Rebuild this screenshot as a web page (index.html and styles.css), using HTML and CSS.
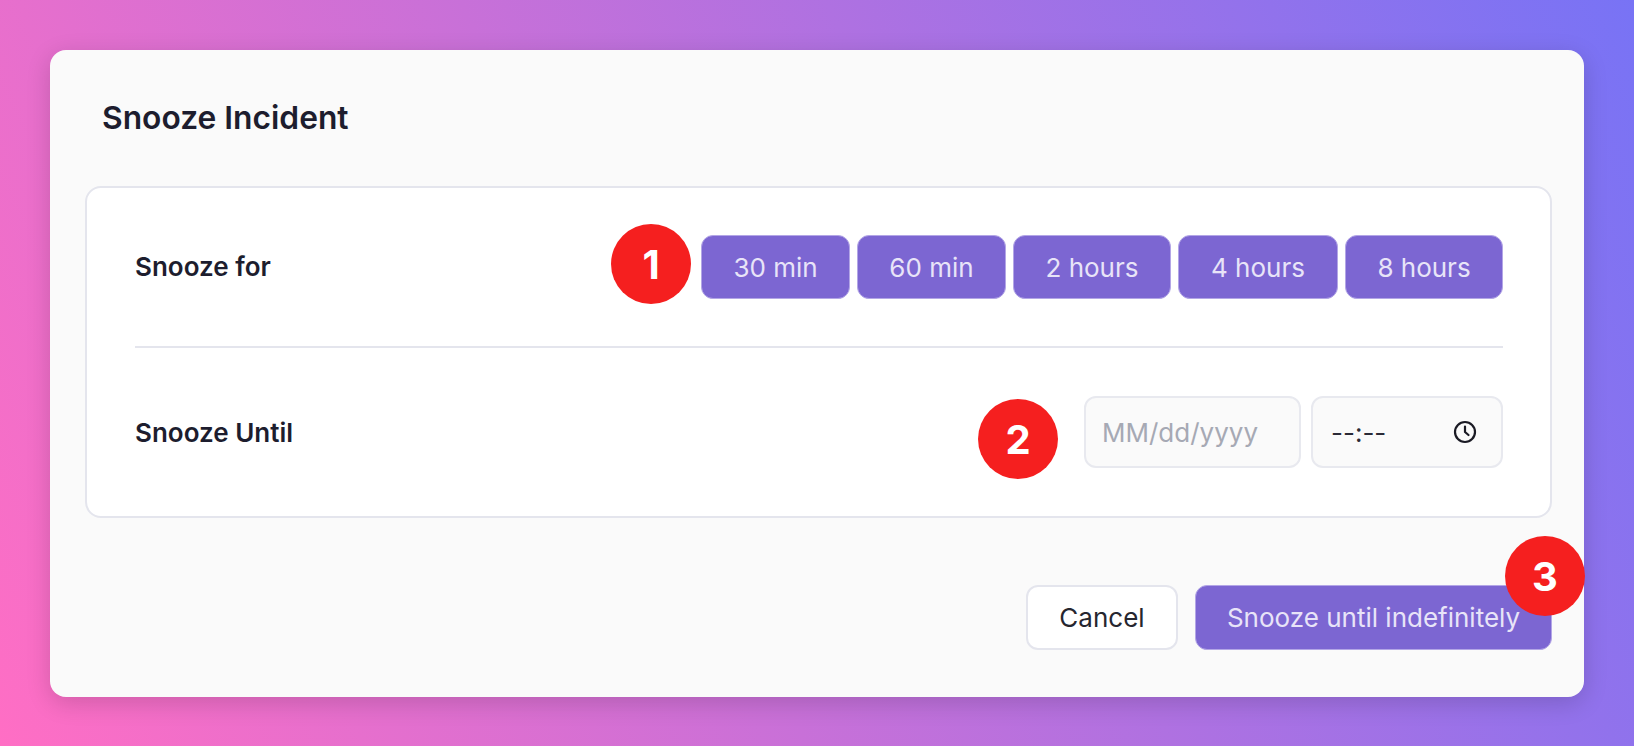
FILE: index.html
```html
<!DOCTYPE html>
<html lang="en">
<head>
<meta charset="utf-8">
<title>Snooze Incident</title>
<link rel="stylesheet" href="styles.css">
</head>
<body>
<main class="modal">
  <h1 class="title">Snooze Incident</h1>
  <section class="panel">
    <div class="row row-top">
      <span class="label">Snooze for</span>
      <div class="choices">
        <button class="btn btn-primary btn-30">30 min</button>
        <button class="btn btn-primary btn-60">60 min</button>
        <button class="btn btn-primary btn-2h">2 hours</button>
        <button class="btn btn-primary btn-4h">4 hours</button>
        <button class="btn btn-primary btn-8h">8 hours</button>
      </div>
    </div>
    <div class="row row-bottom">
      <span class="label">Snooze Until</span>
      <div class="fields">
        <div class="field field-date">MM/dd/yyyy</div>
        <div class="field field-time">
          <span class="time-value">--:--</span>
          <svg class="clock" viewBox="0 0 24 24" width="24" height="24" fill="none" stroke="#1a1a24" stroke-width="2.2" stroke-linecap="round" stroke-linejoin="round"><circle cx="12" cy="12" r="10"/><path d="M12 6.5V12l3.5 3"/></svg>
        </div>
      </div>
    </div>
  </section>
  <footer class="footer">
    <button class="btn btn-cancel">Cancel</button>
    <button class="btn btn-primary btn-submit">Snooze until indefinitely</button>
  </footer>
  <span class="badge badge-1">1</span>
  <span class="badge badge-2">2</span>
  <span class="badge badge-3">3</span>
</main>
</body>
</html>
```
FILE: styles.css
```css
* { box-sizing: border-box; }
html, body { height: 100%; }
body {
  margin: 0;
  padding: 50px;
  background: linear-gradient(65deg, #ff6ec4, #7873f5);
  font-family: Inter, "Liberation Sans", sans-serif;
  overflow: hidden;
}
.modal {
  position: relative;
  width: 1534px;
  height: 647px;
  padding: 0 32px 0 35px;
  background: #fafafa;
  border-radius: 16px;
  box-shadow: 0 6px 24px rgba(0, 0, 0, 0.16);
}
.title {
  margin: 0;
  padding: 49px 0 0 17px;
  height: 136px;
  font-size: 31.75px;
  line-height: 38px;
  font-weight: 600;
  color: #1d1d2e;
}
.panel {
  background: #fff;
  border: 2px solid #e4e5ed;
  border-radius: 16px;
  padding: 0 47px 0 48px;
  height: 332px;
}
.row {
  display: flex;
  align-items: center;
  justify-content: space-between;
}
.row-top {
  height: 160px;
  border-bottom: 2px solid #e4e5ed;
}
.row-bottom { height: 168px; }
.label {
  font-size: 26px;
  font-weight: 600;
  color: #1d1d2e;
}
.row-top .label { margin-top: -2px; }
.choices { display: flex; gap: 7px; }
.btn {
  height: 65px;
  border-radius: 12px;
  font-family: inherit;
  font-size: 26px;
  font-weight: 400;
  padding: 0;
}
.btn-primary {
  color: #e8e4f8;
  background: #7c66d2;
  border: 1px solid #b3a6e6;
}
.choices .btn { height: 64px; }
.btn-30 { width: 149px; }
.btn-60 { width: 149px; }
.btn-2h { width: 158px; }
.btn-4h { width: 160px; }
.btn-8h { width: 158px; }
.fields { display: flex; gap: 10px; }
.field {
  height: 72px;
  background: #fafafa;
  border: 2px solid #e8e9ef;
  border-radius: 12px;
  display: flex;
  align-items: center;
  font-size: 26px;
}
.field-date {
  width: 217px;
  padding-left: 16px;
  color: #a6a9b4;
}
.field-time {
  width: 192px;
  padding: 0 24px 0 18px;
  justify-content: space-between;
  color: #2a2a36;
}
.footer {
  display: flex;
  justify-content: flex-end;
  gap: 17px;
  padding-top: 67px;
}
.btn-cancel {
  width: 152px;
  color: #26262f;
  background: #fff;
  border: 2px solid #e4e5ed;
}
.btn-submit { width: 357px; }
.badge {
  position: absolute;
  width: 80px;
  height: 80px;
  padding-top: 1px;
  border-radius: 50%;
  background: #f51f1f;
  color: #fff;
  font-size: 40px;
  font-weight: 700;
  display: flex;
  align-items: center;
  justify-content: center;
}
.badge-1 { left: 561px; top: 174px; }
.badge-2 { left: 928px; top: 349px; }
.badge-3 { left: 1455px; top: 486px; }
```
